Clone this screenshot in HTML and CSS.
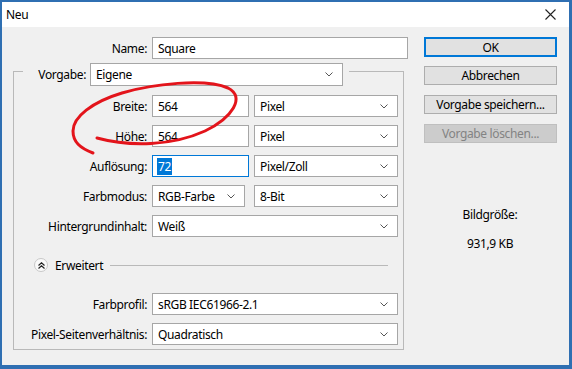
FILE: index.html
```html
<!DOCTYPE html>
<html lang="de">
<head>
    <meta charset="UTF-8">
    <title>Neu</title>
    <link rel="stylesheet" href="styles.css">
</head>
<body>
<div id="window">
    <div class="titlebar">
        <span>Neu</span>
        <svg class="close" width="11" height="11" viewBox="0 0 11 11">
            <path d="M0.5 0.5 L10.5 10.5 M10.5 0.5 L0.5 10.5" stroke="#222" stroke-width="1.1" fill="none"/>
        </svg>
    </div>
    <div class="dialog">
        <div class="form">
            <div class="row name-row">
                <label>Name:</label>
                <div class="field name-field">Square</div>
            </div>
            <fieldset class="group">
                <legend>
                    <label class="preset-label">Vorgabe:</label>
                    <div class="select preset-select">Eigene<svg class="chev" width="8" height="5" viewBox="0 0 8 5"><path d="M0.5 0.5 L4 4 L7.5 0.5" stroke="#555" fill="none"/></svg></div>
                </legend>
                <div class="row first">
                    <label>Breite:</label>
                    <div class="field small">564</div>
                    <div class="select unit">Pixel<svg class="chev" width="8" height="5" viewBox="0 0 8 5"><path d="M0.5 0.5 L4 4 L7.5 0.5" stroke="#555" fill="none"/></svg></div>
                </div>
                <div class="row">
                    <label>Höhe:</label>
                    <div class="field small">564</div>
                    <div class="select unit">Pixel<svg class="chev" width="8" height="5" viewBox="0 0 8 5"><path d="M0.5 0.5 L4 4 L7.5 0.5" stroke="#555" fill="none"/></svg></div>
                </div>
                <div class="row">
                    <label>Auflösung:</label>
                    <div class="field small focused"><span class="selected">72</span></div>
                    <div class="select unit">Pixel/Zoll<svg class="chev" width="8" height="5" viewBox="0 0 8 5"><path d="M0.5 0.5 L4 4 L7.5 0.5" stroke="#555" fill="none"/></svg></div>
                </div>
                <div class="row">
                    <label>Farbmodus:</label>
                    <div class="select mode">RGB-Farbe<svg class="chev" width="8" height="5" viewBox="0 0 8 5"><path d="M0.5 0.5 L4 4 L7.5 0.5" stroke="#555" fill="none"/></svg></div>
                    <div class="select unit">8-Bit<svg class="chev" width="8" height="5" viewBox="0 0 8 5"><path d="M0.5 0.5 L4 4 L7.5 0.5" stroke="#555" fill="none"/></svg></div>
                </div>
                <div class="row">
                    <label>Hintergrundinhalt:</label>
                    <div class="select wide">Weiß<svg class="chev" width="8" height="5" viewBox="0 0 8 5"><path d="M0.5 0.5 L4 4 L7.5 0.5" stroke="#555" fill="none"/></svg></div>
                </div>
                <div class="advanced">
                    <span class="toggle">
                        <svg width="7" height="7" viewBox="0 0 7 7"><path d="M0.5 3.5 L3.5 0.8 L6.5 3.5 M0.5 6.5 L3.5 3.8 L6.5 6.5" stroke="#222" stroke-width="1.2" fill="none"/></svg>
                    </span>
                    <span>Erweitert</span>
                    <span class="rule"></span>
                </div>
                <div class="row">
                    <label>Farbprofil:</label>
                    <div class="select wide">sRGB IEC61966-2.1<svg class="chev" width="8" height="5" viewBox="0 0 8 5"><path d="M0.5 0.5 L4 4 L7.5 0.5" stroke="#555" fill="none"/></svg></div>
                </div>
                <div class="row">
                    <label>Pixel-Seitenverhältnis:</label>
                    <div class="select wide">Quadratisch<svg class="chev" width="8" height="5" viewBox="0 0 8 5"><path d="M0.5 0.5 L4 4 L7.5 0.5" stroke="#555" fill="none"/></svg></div>
                </div>
            </fieldset>
        </div>
        <div class="buttons">
            <button class="default">OK</button>
            <button>Abbrechen</button>
            <button>Vorgabe speichern...</button>
            <button class="disabled">Vorgabe löschen...</button>
            <div class="size">
                <div>Bildgröße:</div>
                <div class="size-value">931,9 KB</div>
            </div>
        </div>
    </div>
    <svg class="scribble" width="572" height="369" viewBox="0 0 572 369">
        <path d="M97 138 C130 147, 172 146, 205 131 C232 118, 246 97, 228 88 C205 78, 152 84, 122 93 C92 102, 73 117, 73 131 C73 142, 80 148, 93 153"
              stroke="#e3141b" stroke-width="3" fill="none" stroke-linecap="round"/>
    </svg>
</div>
</body>
</html>
```

FILE: styles.css
```css
body, html {
    margin: 0;
    padding: 0;
    font-family: "Noto Sans", Arial, sans-serif;
    font-size: 12px;
    letter-spacing: -0.35px;
    color: #000;
}

#window {
    position: relative;
    width: 572px;
    height: 369px;
    box-sizing: border-box;
    border-style: solid;
    border-color: #2f6fb2;
    border-width: 2px 3px 4px 2px;
    background-color: #f0f0f0;
}

.titlebar {
    height: 25px;
    background-color: #fff;
    display: flex;
    align-items: center;
    justify-content: space-between;
    padding: 0 13px 0 4px;
}

.dialog {
    display: flex;
    padding-top: 10px;
}

.form {
    width: 410px;
    padding-left: 11px;
    box-sizing: border-box;
}

.row {
    display: flex;
    align-items: center;
    height: 22px;
    margin-top: 8px;
}

.row label {
    width: 133px;
    margin-right: 5px;
    text-align: right;
    white-space: nowrap;
}

.name-row {
    margin-top: 0;
}

.name-row label {
    width: 134px;
}

.field, .select {
    height: 22px;
    box-sizing: border-box;
    border: 1px solid #a6a6a6;
    background-color: #fff;
    padding-left: 5px;
    display: flex;
    align-items: center;
    white-space: nowrap;
}

.select {
    justify-content: space-between;
    padding-right: 9px;
}

.name-field {
    width: 256px;
}

.small {
    width: 97px;
}

.focused {
    border-color: #0078d7;
    padding-left: 4px;
}

.selected {
    background-color: #0078d7;
    color: #fff;
    padding: 0 1px;
}

.unit {
    width: 144px;
    margin-left: 5px;
}

.mode {
    width: 93px;
}

.mode + .unit {
    margin-left: 9px;
}

.wide {
    width: 246px;
}

.group {
    margin: -3px 0 0 0;
    padding: 0 0 4px 0;
    width: 391px;
    box-sizing: border-box;
    border: 1px solid #b9b9b9;
    min-width: 0;
}

.group legend {
    display: flex;
    align-items: center;
    margin-left: 9px;
    padding: 7px 6px 0 0;
}

.preset-label {
    width: 63px;
    margin-right: 4px;
    text-align: right;
}

.preset-select {
    width: 253px;
    height: 23px;
}

.group .first {
    margin-top: 9px;
}

.advanced {
    display: flex;
    align-items: center;
    height: 16px;
    margin-top: 20px;
    padding-left: 20px;
}

.toggle {
    width: 14px;
    height: 14px;
    box-sizing: border-box;
    border: 1px solid #c8c8c8;
    border-radius: 50%;
    background-color: #fafafa;
    display: flex;
    align-items: center;
    justify-content: center;
    margin-right: 7px;
}

.rule {
    flex: 0 0 278px;
    height: 1px;
    background-color: #b9b9b9;
    margin-left: 7px;
}

.advanced + .row {
    margin-top: 20px;
}

.buttons {
    display: flex;
    flex-direction: column;
    width: 133px;
    margin-left: 12px;
}

.buttons button {
    height: 19px;
    margin: 0 0 10px 0;
    padding: 0;
    font-family: inherit;
    font-size: 12px;
    letter-spacing: inherit;
    color: #000;
    background-color: #e1e1e1;
    border: 1px solid #adadad;
    box-sizing: border-box;
}

.buttons .default {
    height: 20px;
    margin-bottom: 9px;
    border: 2px solid #0078d7;
}

.buttons .disabled {
    background-color: #cccccc;
    border-color: #bfbfbf;
    color: #838383;
}

.size {
    margin-top: 54px;
    text-align: center;
    line-height: 16px;
    padding-right: 1px;
}

.size-value {
    margin-top: 13px;
}

.scribble {
    position: absolute;
    top: -2px;
    left: -2px;
    pointer-events: none;
}
```
